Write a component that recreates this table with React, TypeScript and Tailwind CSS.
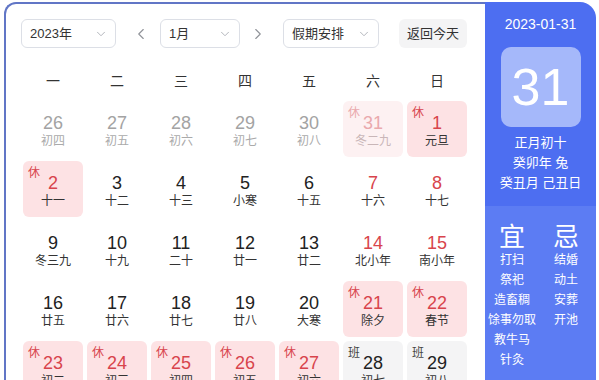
import React from "react";
import { ChevronDown, ChevronLeft, ChevronRight } from "lucide-react";

type Day = {
  day: number;
  lunar: string;
  kind?: "prev" | "rest" | "restPrev" | "work" | "weekend";
};

const weeks: Day[][] = [
  [
    { day: 26, lunar: "初四", kind: "prev" },
    { day: 27, lunar: "初五", kind: "prev" },
    { day: 28, lunar: "初六", kind: "prev" },
    { day: 29, lunar: "初七", kind: "prev" },
    { day: 30, lunar: "初八", kind: "prev" },
    { day: 31, lunar: "冬二九", kind: "restPrev" },
    { day: 1, lunar: "元旦", kind: "rest" },
  ],
  [
    { day: 2, lunar: "十一", kind: "rest" },
    { day: 3, lunar: "十二" },
    { day: 4, lunar: "十三" },
    { day: 5, lunar: "小寒" },
    { day: 6, lunar: "十五" },
    { day: 7, lunar: "十六", kind: "weekend" },
    { day: 8, lunar: "十七", kind: "weekend" },
  ],
  [
    { day: 9, lunar: "冬三九" },
    { day: 10, lunar: "十九" },
    { day: 11, lunar: "二十" },
    { day: 12, lunar: "廿一" },
    { day: 13, lunar: "廿二" },
    { day: 14, lunar: "北小年", kind: "weekend" },
    { day: 15, lunar: "南小年", kind: "weekend" },
  ],
  [
    { day: 16, lunar: "廿五" },
    { day: 17, lunar: "廿六" },
    { day: 18, lunar: "廿七" },
    { day: 19, lunar: "廿八" },
    { day: 20, lunar: "大寒" },
    { day: 21, lunar: "除夕", kind: "rest" },
    { day: 22, lunar: "春节", kind: "rest" },
  ],
  [
    { day: 23, lunar: "初二", kind: "rest" },
    { day: 24, lunar: "初三", kind: "rest" },
    { day: 25, lunar: "初四", kind: "rest" },
    { day: 26, lunar: "初五", kind: "rest" },
    { day: 27, lunar: "初六", kind: "rest" },
    { day: 28, lunar: "初七", kind: "work" },
    { day: 29, lunar: "初八", kind: "work" },
  ],
];

const weekNames = ["一", "二", "三", "四", "五", "六", "日"];
const yi = ["打扫", "祭祀", "造畜稠", "馀事勿取", "教牛马", "针灸"];
const ji = ["结婚", "动土", "安葬", "开池"];

const Select = ({ label, width }: { label: string; width: string }) => (
  <div
    className={`${width} h-[29px] flex items-center justify-between pl-[8px] pr-[7px] border border-[#dcdfe6] rounded-[6px] text-[13px] text-[#333]`}
  >
    <span>{label}</span>
    <ChevronDown size={14} strokeWidth={1.5} className="text-[#a8abb2]" />
  </div>
);

const Cell = ({ d }: { d: Day }) => {
  const bg =
    d.kind === "rest"
      ? "bg-[#fde2e4]"
      : d.kind === "restPrev"
      ? "bg-[#fdf1f2]"
      : d.kind === "work"
      ? "bg-[#f4f4f5]"
      : "";
  const numColor =
    d.kind === "prev"
      ? "text-[#a3a3a3]"
      : d.kind === "restPrev"
      ? "text-[#eaa9ad]"
      : d.kind === "rest" || d.kind === "weekend"
      ? "text-[#d8444c]"
      : "text-[#222]";
  const lunarColor =
    d.kind === "prev"
      ? "text-[#aaa]"
      : d.kind === "restPrev"
      ? "text-[#c9b6b8]"
      : "text-[#333]";
  const badge =
    d.kind === "rest" || d.kind === "restPrev" ? "休" : d.kind === "work" ? "班" : "";
  const badgeColor =
    d.kind === "restPrev"
      ? "text-[#eaa9ad]"
      : d.kind === "work"
      ? "text-[#444]"
      : "text-[#d8444c]";
  return (
    <div className={`relative h-[56px] rounded-[6px] flex flex-col items-center pt-[12px] ${bg}`}>
      {badge && (
        <span className={`absolute left-[5px] top-[5px] text-[12px] leading-[14px] ${badgeColor}`}>
          {badge}
        </span>
      )}
      <span className={`text-[18px] leading-[20px] ${numColor}`}>{d.day}</span>
      <span className={`text-[12px] leading-[16px] ${lunarColor}`}>{d.lunar}</span>
    </div>
  );
};

export default function App() {
  return (
    <div
      className="w-[599px] h-[380px] overflow-hidden bg-white"
      style={{ fontFamily: '"Liberation Sans", "Noto Sans CJK SC", sans-serif' }}
    >
      <div className="flex ml-[4px] mt-[2px]">
        <div className="w-[481px] h-[420px] border-l-2 border-t-2 border-[#6176c6] rounded-tl-[12px] pt-[15px] pl-[15px]">
          <div className="flex items-center h-[29px]">
            <Select label="2023年" width="w-[95px]" />
            <ChevronLeft size={18} strokeWidth={1.5} className="text-[#909399] ml-[16px]" />
            <div className="ml-[10px]">
              <Select label="1月" width="w-[80px]" />
            </div>
            <ChevronRight size={18} strokeWidth={1.5} className="text-[#909399] ml-[9px]" />
            <div className="ml-[16px]">
              <Select label="假期安排" width="w-[96px]" />
            </div>
            <div className="ml-[20px] w-[68px] h-[29px] flex items-center justify-center rounded-[6px] bg-[#f4f4f5] text-[13px] text-[#333]">
              返回今天
            </div>
          </div>
          <div className="ml-[2px] mt-[23px] grid grid-cols-[repeat(7,60px)] gap-x-[4px] text-[14px] leading-[20px] text-[#333] text-center">
            {weekNames.map((w) => (
              <span key={w}>{w}</span>
            ))}
          </div>
          <div className="ml-[2px] mt-[10px] grid grid-cols-[repeat(7,60px)] gap-[4px]">
            {weeks.flat().map((d, i) => (
              <Cell key={i} d={d} />
            ))}
          </div>
        </div>
        <div className="w-[111px] h-[420px] rounded-tr-[16px] overflow-hidden flex flex-col text-white">
          <div className="bg-[#4d6ef1] flex flex-col items-center pt-[12px] pb-[13px]">
            <span className="text-[14px] leading-[20px]">2023-01-31</span>
            <div className="mt-[13px] w-[80px] h-[80px] rounded-[10px] bg-[#a5b8fa] flex items-center justify-center text-[52px] leading-none">
              31
            </div>
            <div className="mt-[6px] flex flex-col items-center text-[13px] leading-[20px]">
              <span>正月初十</span>
              <span>癸卯年 兔</span>
              <span>癸丑月 己丑日</span>
            </div>
          </div>
          <div className="flex-1 bg-[#5c7cf3] grid grid-cols-2 pt-[18px] pr-[3px] content-start">
            <div className="flex flex-col items-center">
              <span className="text-[26px] leading-[26px]">宜</span>
              {yi.map((t) => (
                <span key={t} className="text-[12px] leading-[20px] whitespace-nowrap">
                  {t}
                </span>
              ))}
            </div>
            <div className="flex flex-col items-center">
              <span className="text-[26px] leading-[26px]">忌</span>
              {ji.map((t) => (
                <span key={t} className="text-[12px] leading-[20px]">
                  {t}
                </span>
              ))}
            </div>
          </div>
        </div>
      </div>
    </div>
  );
}
